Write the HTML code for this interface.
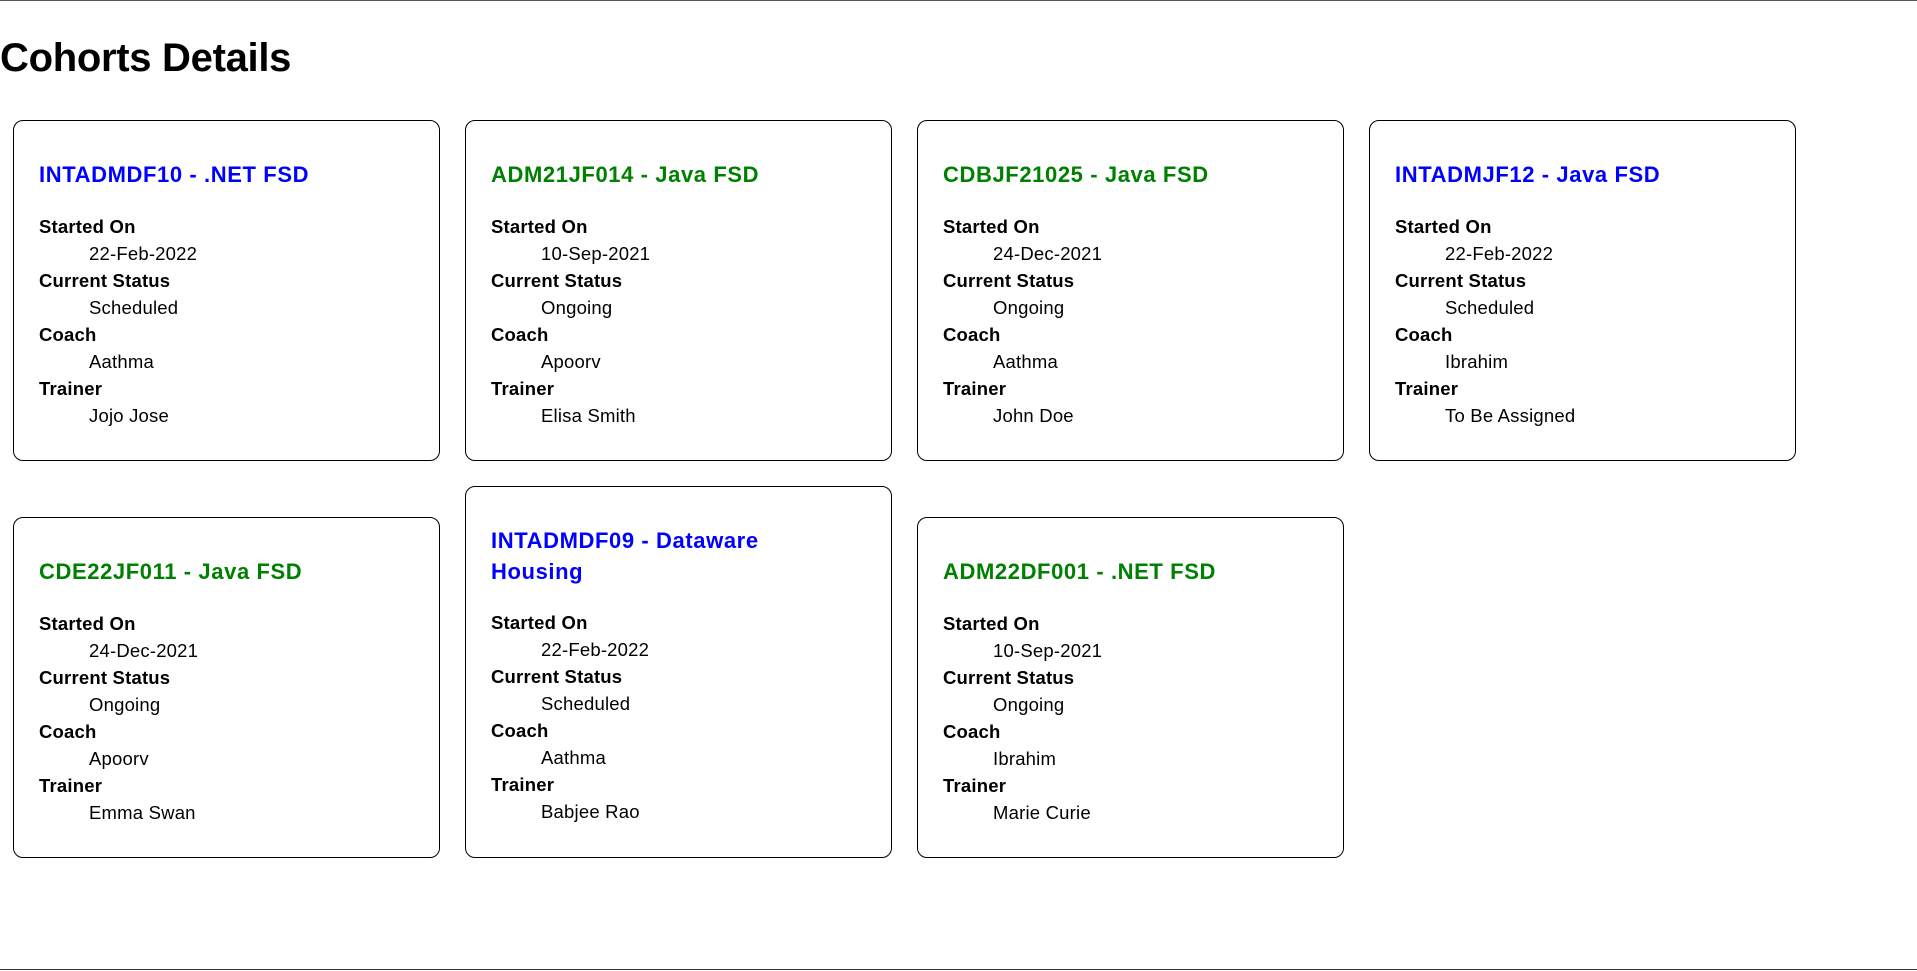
<!DOCTYPE html>
<html><head><meta charset="utf-8"><style>
html,body{margin:0;padding:0;background:#fff;}
body{width:1917px;height:971px;position:relative;overflow:hidden;font-family:"Liberation Sans",sans-serif;color:#000;}
.tl{position:absolute;left:0;top:0;width:1917px;height:1px;background:#555;}
.bl{position:absolute;left:0;top:969px;width:1917px;height:1px;background:#333;}
h1{position:absolute;left:0;top:33px;margin:0;font-size:40px;line-height:50px;font-weight:bold;letter-spacing:-0.3px;}
.card{position:absolute;width:425px;border:1px solid #000;border-radius:10px;box-sizing:content-box;}
.card h3{margin:0;position:absolute;left:25px;top:38px;font-size:22px;line-height:31px;font-weight:bold;white-space:nowrap;letter-spacing:0.6px;}
.b{color:#0000ff}.g{color:#008000}
.card dl{margin:0;position:absolute;left:25px;font-size:18.5px;line-height:27px;letter-spacing:0.2px;}
.card dt{font-weight:bold;}
.card dd{margin-left:50px;}
</style></head><body>
<div class="tl"></div>
<h1>Cohorts Details</h1>

<div class="card" style="left:13px;top:120px;height:339px"><h3 class="b">INTADMDF10 - .NET FSD</h3><dl style="top:92px"><dt>Started On</dt><dd>22-Feb-2022</dd><dt>Current Status</dt><dd>Scheduled</dd><dt>Coach</dt><dd>Aathma</dd><dt>Trainer</dt><dd>Jojo Jose</dd></dl></div>

<div class="card" style="left:465px;top:120px;height:339px"><h3 class="g">ADM21JF014 - Java FSD</h3><dl style="top:92px"><dt>Started On</dt><dd>10-Sep-2021</dd><dt>Current Status</dt><dd>Ongoing</dd><dt>Coach</dt><dd>Apoorv</dd><dt>Trainer</dt><dd>Elisa Smith</dd></dl></div>

<div class="card" style="left:917px;top:120px;height:339px"><h3 class="g">CDBJF21025 - Java FSD</h3><dl style="top:92px"><dt>Started On</dt><dd>24-Dec-2021</dd><dt>Current Status</dt><dd>Ongoing</dd><dt>Coach</dt><dd>Aathma</dd><dt>Trainer</dt><dd>John Doe</dd></dl></div>

<div class="card" style="left:1369px;top:120px;height:339px"><h3 class="b">INTADMJF12 - Java FSD</h3><dl style="top:92px"><dt>Started On</dt><dd>22-Feb-2022</dd><dt>Current Status</dt><dd>Scheduled</dd><dt>Coach</dt><dd>Ibrahim</dd><dt>Trainer</dt><dd>To Be Assigned</dd></dl></div>

<div class="card" style="left:13px;top:517px;height:339px"><h3 class="g">CDE22JF011 - Java FSD</h3><dl style="top:92px"><dt>Started On</dt><dd>24-Dec-2021</dd><dt>Current Status</dt><dd>Ongoing</dd><dt>Coach</dt><dd>Apoorv</dd><dt>Trainer</dt><dd>Emma Swan</dd></dl></div>

<div class="card" style="left:465px;top:486px;height:370px"><h3 class="b">INTADMDF09 - Dataware<br>Housing</h3><dl style="top:122px"><dt>Started On</dt><dd>22-Feb-2022</dd><dt>Current Status</dt><dd>Scheduled</dd><dt>Coach</dt><dd>Aathma</dd><dt>Trainer</dt><dd>Babjee Rao</dd></dl></div>

<div class="card" style="left:917px;top:517px;height:339px"><h3 class="g">ADM22DF001 - .NET FSD</h3><dl style="top:92px"><dt>Started On</dt><dd>10-Sep-2021</dd><dt>Current Status</dt><dd>Ongoing</dd><dt>Coach</dt><dd>Ibrahim</dd><dt>Trainer</dt><dd>Marie Curie</dd></dl></div>

<div class="bl"></div>
</body></html>
